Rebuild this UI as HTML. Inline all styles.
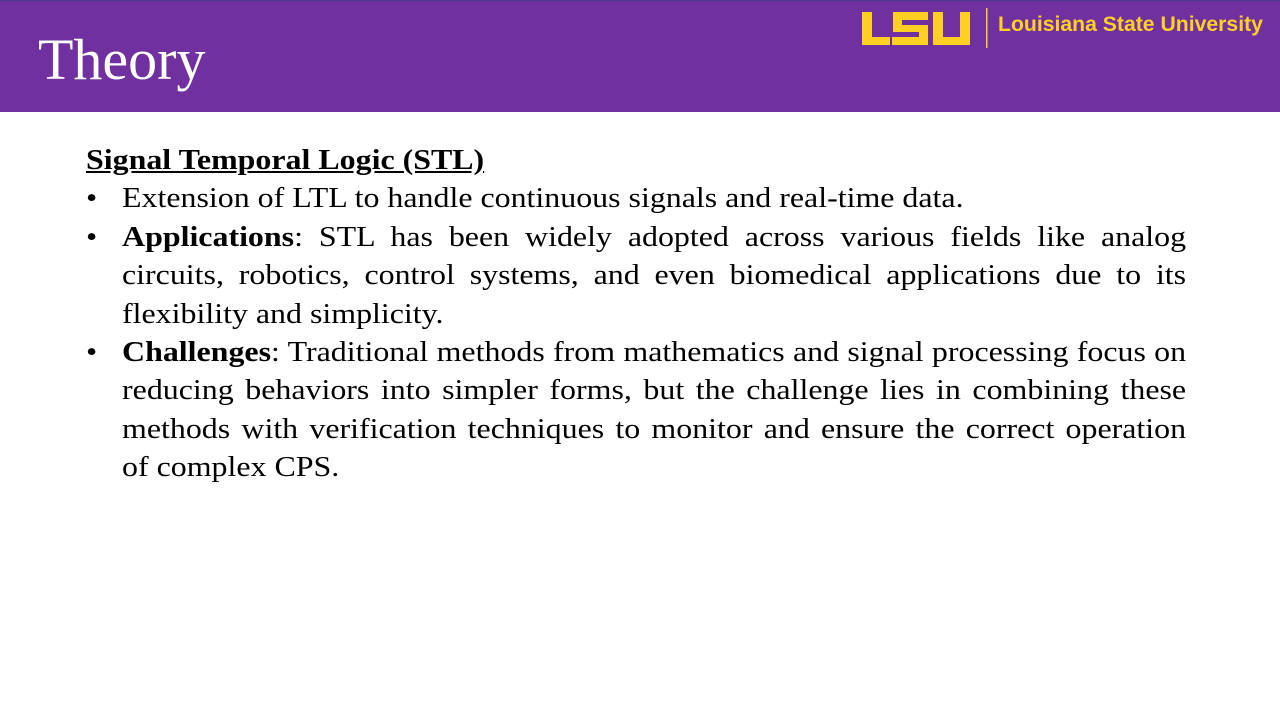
<!DOCTYPE html>
<html><head><style>
body{margin:0;width:1280px;height:720px;background:#fff;position:relative;overflow:hidden;font-family:"Liberation Serif",serif;}
.hdr{position:absolute;left:0;top:0;width:1280px;height:112px;background:#7030a0;border-top:1px solid #4a3a8a;box-sizing:border-box;}
.title{position:absolute;left:38px;top:24px;color:#fff;font-size:58px;line-height:70px;}
.lsu{position:absolute;left:998px;top:12px;color:#fdd023;font:bold 21.2px "Liberation Sans",sans-serif;}
.body{position:absolute;left:86px;top:142px;width:965px;font-size:28px;line-height:38.4px;color:#000;transform:scaleX(1.14);transform-origin:0 0;}
.h{font-weight:bold;text-decoration:underline;}
.li{position:relative;padding-left:31.6px;text-align:justify;}
.li:before{content:"•";position:absolute;left:0;}
</style></head><body>
<div class="hdr">
<div class="title">Theory</div>
<svg style="position:absolute;left:0;top:0" width="1280" height="112">
<g fill="#fdd023">
<path d="M862 11h10v25h18v8h-28z"/>
<path d="M893 11h35v8h-26v5h26v20h-36v-8h27v-5h-26z"/>
<path d="M933 11h10v25h17v-25h10v33h-37z"/>
<rect x="986" y="7" width="1.5" height="40"/>
</g></svg>
<div class="lsu">Louisiana State University</div>
</div>
<div class="body">
<div class="h">Signal Temporal Logic (STL)</div>
<div class="li">Extension of LTL to handle continuous signals and real-time data.</div>
<div class="li"><b>Applications</b>: STL has been widely adopted across various fields like analog circuits, robotics, control systems, and even biomedical applications due to its flexibility and simplicity.</div>
<div class="li"><b>Challenges</b>: Traditional methods from mathematics and signal processing focus on reducing behaviors into simpler forms, but the challenge lies in combining these methods with verification techniques to monitor and ensure the correct operation of complex CPS.</div>
</div>
</body></html>
